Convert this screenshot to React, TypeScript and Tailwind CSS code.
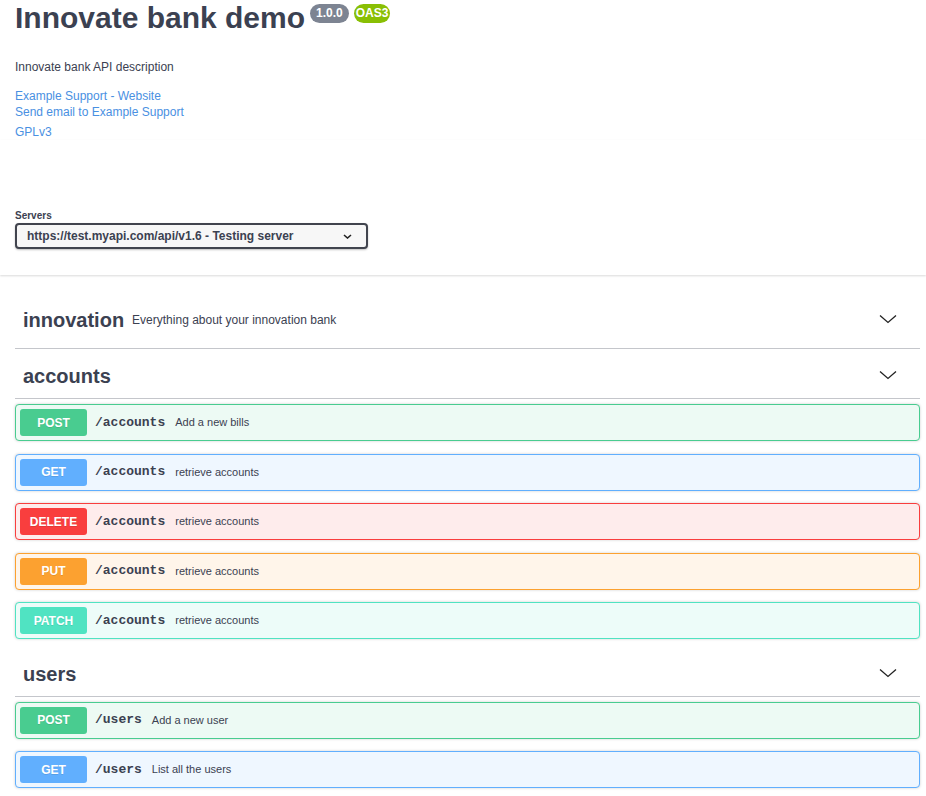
const methodStyles: Record<string, { block: string; badge: string }> = {
  POST: { block: 'bg-[#edfaf4] border-[#49cc90]', badge: 'bg-[#49cc90]' },
  GET: { block: 'bg-[#eff7ff] border-[#61affe]', badge: 'bg-[#61affe]' },
  DELETE: { block: 'bg-[#feecec] border-[#f93e3e]', badge: 'bg-[#f93e3e]' },
  PUT: { block: 'bg-[#fff5ea] border-[#fca130]', badge: 'bg-[#fca130]' },
  PATCH: { block: 'bg-[#edfcf9] border-[#50e3c2]', badge: 'bg-[#50e3c2]' },
};

const accountOps = [
  { method: 'POST', path: '/accounts', summary: 'Add a new bills' },
  { method: 'GET', path: '/accounts', summary: 'retrieve accounts' },
  { method: 'DELETE', path: '/accounts', summary: 'retrieve accounts' },
  { method: 'PUT', path: '/accounts', summary: 'retrieve accounts' },
  { method: 'PATCH', path: '/accounts', summary: 'retrieve accounts' },
];

const userOps = [
  { method: 'POST', path: '/users', summary: 'Add a new user' },
  { method: 'GET', path: '/users', summary: 'List all the users' },
];

function Chevron() {
  return (
    <svg width="20" height="20" viewBox="0 0 20 20" className="ml-auto shrink-0">
      <path d="M2 5.5 L10 12.5 L18 5.5" fill="none" stroke="#222" strokeWidth="1.3" />
    </svg>
  );
}

function Operation({ method, path, summary }: { method: string; path: string; summary: string }) {
  const s = methodStyles[method];
  return (
    <div
      className={`flex items-center h-[37px] mb-[12.5px] border rounded-[4px] px-[4px] shadow-[0_0_3px_rgba(0,0,0,0.19)] ${s.block}`}
    >
      <span
        className={`min-w-[67px] h-[27px] px-[6px] flex items-center justify-center rounded-[3px] text-white text-[12px] font-bold [text-shadow:0_1px_0_rgba(0,0,0,0.1)] ${s.badge}`}
      >
        {method}
      </span>
      <span className="pl-[8px] pr-[10px] font-['Liberation_Mono',monospace] text-[13px] font-bold">{path}</span>
      <span className="text-[11px]">{summary}</span>
    </div>
  );
}

export default function App() {
  return (
    <div className="min-h-screen bg-white font-['Liberation_Sans',Arial,sans-serif] text-[#3b4151]">
      <div className="pl-[15px] pr-[5px]">
        <div className="flex items-start">
          <h1 className="text-[30px] leading-[36px] font-bold">Innovate bank demo</h1>
          <div className="flex gap-[5px] ml-[5px] mt-[4px]">
            <span className="h-[19px] px-[6px] rounded-full bg-[#7d8492] text-white text-[12px] font-bold leading-[19px]">
              1.0.0
            </span>
            <span className="h-[19px] px-[2px] rounded-full bg-[#89bf04] text-white text-[12px] font-bold leading-[19px]">
              OAS3
            </span>
          </div>
        </div>
        <p className="mt-[23px] text-[12px] leading-[16px]">Innovate bank API description</p>
        <div className="mt-[13px] text-[12px] leading-[16px] text-[#4990e2]">
          <a className="block">Example Support - Website</a>
          <a className="block">Send email to Example Support</a>
          <a className="block mt-[4px]">GPLv3</a>
        </div>
      </div>

      <div className="shadow-[0_1px_2px_0_rgba(0,0,0,0.15)]">
        <div className="pl-[15px] pt-[70px] pb-[26px]">
          <div className="text-[10px] leading-[12px] font-bold">Servers</div>
          <div className="mt-[1px] w-[353px] h-[26px] flex items-center pl-[10px] pr-[14px] border-2 border-[#41444e] rounded-[4px] bg-[#f7f7f7] shadow-[0_1px_2px_0_rgba(0,0,0,0.25)]">
            <span className="text-[12px] font-bold">https://test.myapi.com/api/v1.6 - Testing server</span>
            <svg width="9" height="5" viewBox="0 0 9 5" className="ml-auto">
              <path d="M1 1 L4.5 4 L8 1" fill="none" stroke="#222" strokeWidth="1.6" />
            </svg>
          </div>
        </div>
      </div>

      <div className="pl-[15px] pr-[6px] mt-[23px]">
        <div className="flex items-center pl-[8px] pr-[22px] pt-[10px] pb-[16px] mb-[5px] border-b border-[#c4c6cb]">
          <span className="text-[20px] leading-[24px] font-bold">innovation</span>
          <span className="pl-[8px] text-[12px] leading-[14px]">Everything about your innovation bank</span>
          <Chevron />
        </div>

        <div className="flex items-center pl-[8px] pr-[22px] py-[10px] mb-[5px] border-b border-[#c4c6cb]">
          <span className="text-[20px] leading-[24px] font-bold">accounts</span>
          <Chevron />
        </div>
        {accountOps.map((op, i) => (
          <Operation key={i} {...op} />
        ))}

        <div className="flex items-center pl-[8px] pr-[22px] py-[10px] mb-[5px] border-b border-[#c4c6cb]">
          <span className="text-[20px] leading-[24px] font-bold">users</span>
          <Chevron />
        </div>
        {userOps.map((op, i) => (
          <Operation key={i} {...op} />
        ))}
      </div>
    </div>
  );
}
